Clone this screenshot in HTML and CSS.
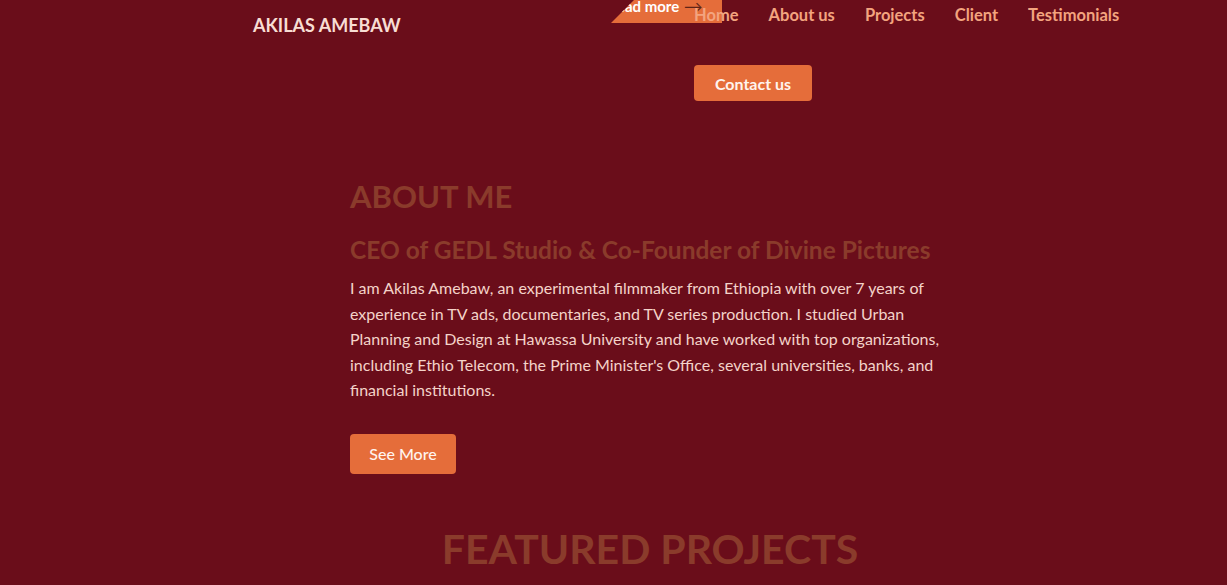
FILE: index.html
```html
<!DOCTYPE html>
<html lang="en">
<head>
<meta charset="utf-8">
<title>Akilas Amebaw</title>
<link rel="stylesheet" href="styles.css">
</head>
<body>
<header class="header">
  <div class="logo">AKILAS AMEBAW</div>
  <nav class="nav">
    <a class="nav-link" href="#">Home</a>
    <a class="nav-link" href="#">About us</a>
    <a class="nav-link" href="#">Projects</a>
    <a class="nav-link" href="#">Client</a>
    <a class="nav-link" href="#">Testimonials</a>
    <a class="btn btn-contact" href="#">Contact us</a>
  </nav>
  <div class="ribbon"><span class="ribbon-text">Read more <span class="ribbon-arrow">&#10230;</span></span></div>
</header>
<main>
  <section class="about">
    <h2 class="about-title">ABOUT ME</h2>
    <h3 class="about-sub">CEO of GEDL Studio &amp; Co-Founder of Divine Pictures</h3>
    <p class="about-text">I am Akilas Amebaw, an experimental filmmaker from Ethiopia with over 7 years of experience in TV ads, documentaries, and TV series production. I studied Urban Planning and Design at Hawassa University and have worked with top organizations, including Ethio Telecom, the Prime Minister's Office, several universities, banks, and financial institutions.</p>
    <a class="btn btn-more" href="#">See More</a>
  </section>
  <section class="featured">
    <h2 class="featured-title">FEATURED PROJECTS</h2>
  </section>
</main>
</body>
</html>
```
FILE: styles.css
```css
* { box-sizing: border-box; }
html, body { margin: 0; padding: 0; }
body {
  background: #6a0d1a;
  font-family: "Lato", "Inter", sans-serif;
  color: #f4d3c9;
  overflow: hidden;
  height: 585px;
}
a { text-decoration: none; }
.header {
  position: relative;
  display: flex;
  padding-left: 253px;
}
.logo {
  color: #f8ddd3;
  font-weight: 700;
  font-size: 18px;
  margin-top: 14px;
  line-height: 22px;
  width: 441px;
}
.nav {
  display: flex;
  flex-wrap: wrap;
  width: 440px;
  column-gap: 30px;
  row-gap: 39px;
  padding-top: 4px;
  position: relative;
  z-index: 2;
}
.nav-link {
  color: #f3a47f;
  font-weight: 700;
  font-size: 16.5px;
  line-height: 22px;
}
.btn {
  display: inline-flex;
  align-items: center;
  justify-content: center;
  background: #e56d3a;
  color: #fff4ee;
  border-radius: 4px;
  font-size: 16px;
}
.btn-contact {
  width: 118px;
  height: 36px;
  font-weight: 700;
}
.ribbon {
  position: absolute;
  left: 611px;
  top: 0;
  width: 111px;
  height: 23px;
  background: #e56d3a;
  clip-path: polygon(23px 0, 100% 0, 100% 100%, 0 100%);
  overflow: hidden;
  z-index: 1;
}
.ribbon-text {
  position: absolute;
  right: 19px;
  top: -3px;
  white-space: nowrap;
  color: #fff;
  font-weight: 700;
  font-size: 15px;
  line-height: 18px;
}
.ribbon-arrow {
  color: #5e2418;
  font-weight: 400;
}
.about {
  padding-left: 350px;
  padding-top: 75px;
  width: 960px;
}
.about-title {
  margin: 0;
  color: #8a3b2b;
  font-size: 31px;
  font-weight: 700;
  line-height: 40px;
}
.about-sub {
  margin: 19px 0 0;
  color: #8a3b2b;
  font-size: 24.5px;
  font-weight: 700;
  line-height: 30px;
}
.about-text {
  margin: 10px 0 0;
  font-size: 16px;
  line-height: 25.6px;
  color: #f4d3c9;
  width: 600px;
}
.btn-more {
  margin-top: 31px;
  width: 106px;
  height: 40px;
  font-weight: 500;
}
.featured {
  width: 100%;
  padding-left: 73px;
  text-align: center;
  padding-top: 50px;
}
.featured-title {
  margin: 0;
  color: #8a3b2b;
  font-size: 41px;
  font-weight: 700;
  line-height: 50px;
}
```
